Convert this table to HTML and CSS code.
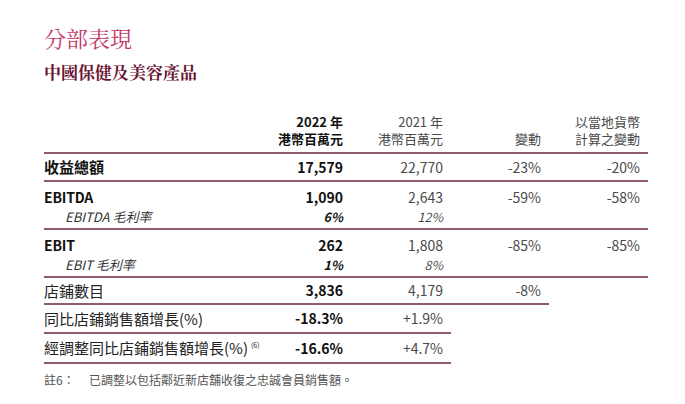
FILE: index.html
```html
<!DOCTYPE html>
<html lang="zh-Hant">
<head>
<meta charset="utf-8">
<title>分部表現</title>
<link rel="stylesheet" href="styles.css">
</head>
<body>
<main class="page">
  <h1 class="title">分部表現</h1>
  <h2 class="subtitle">中國保健及美容產品</h2>

  <section class="table">
    <div class="row head">
      <div class="c"></div>
      <div class="c num strong"><div>2022 年</div><div>港幣百萬元</div></div>
      <div class="c num"><div>2021 年</div><div>港幣百萬元</div></div>
      <div class="c num"><div>變動</div></div>
      <div class="c num"><div>以當地貨幣</div><div>計算之變動</div></div>
    </div>

    <div class="row r1">
      <div class="c label strong">收益總額</div>
      <div class="c num strong">17,579</div>
      <div class="c num">22,770</div>
      <div class="c num">-23%</div>
      <div class="c num">-20%</div>
    </div>

    <div class="row r2">
      <div class="c label"><div class="latin strong">EBITDA</div><div class="sub">EBITDA 毛利率</div></div>
      <div class="c num"><div class="strong">1,090</div><div class="sub strong">6%</div></div>
      <div class="c num"><div>2,643</div><div class="sub">12%</div></div>
      <div class="c num"><div>-59%</div></div>
      <div class="c num"><div>-58%</div></div>
    </div>

    <div class="row r2">
      <div class="c label"><div class="latin strong">EBIT</div><div class="sub">EBIT 毛利率</div></div>
      <div class="c num"><div class="strong">262</div><div class="sub strong">1%</div></div>
      <div class="c num"><div>1,808</div><div class="sub">8%</div></div>
      <div class="c num"><div>-85%</div></div>
      <div class="c num"><div>-85%</div></div>
    </div>

    <div class="row r4">
      <div class="c label">店鋪數目</div>
      <div class="c num strong">3,836</div>
      <div class="c num">4,179</div>
      <div class="c num">-8%</div>
      <div class="blank"></div>
    </div>

    <div class="row r5">
      <div class="c label">同比店鋪銷售額增長(%)</div>
      <div class="c num strong">-18.3%</div>
      <div class="c num">+1.9%</div>
      <div class="blank"></div>
      <div class="blank"></div>
    </div>

    <div class="row r6">
      <div class="c label">經調整同比店鋪銷售額增長(%)<sup class="note-ref">(6)</sup></div>
      <div class="c num strong">-16.6%</div>
      <div class="c num">+4.7%</div>
      <div class="blank"></div>
      <div class="blank"></div>
    </div>
  </section>

  <p class="footnote"><span class="fn-key">註6：</span><span>已調整以包括鄰近新店舖收復之忠誠會員銷售額。</span></p>
</main>
</body>
</html>
```

FILE: styles.css
```css
:root {
  --line: #8f5b6f;
  --text: #1f1f1f;
  --soft: #4a4a4a;
}

* { box-sizing: content-box; }

body {
  margin: 0;
  background: #ffffff;
  color: var(--text);
  font-family: "Noto Sans CJK TC", "Noto Sans", sans-serif;
}

.page {
  padding: 23px 0 0 44px;
}

.title {
  margin: 0;
  font-family: "Noto Serif CJK TC", "Noto Serif CJK SC", "Liberation Serif", serif;
  font-weight: 400;
  font-size: 22px;
  line-height: 30px;
  color: #c23869;
}

.subtitle {
  margin: 7px 0 0;
  font-family: "Noto Serif CJK TC", "Noto Serif CJK SC", "Liberation Serif", serif;
  font-weight: 700;
  font-size: 17px;
  line-height: 24px;
  color: #6b1434;
}

.table {
  margin-top: 29px;
  width: 604px;
}

.row {
  display: grid;
  grid-template-columns: 227px 80px 100px 98px 99px;
}

.c {
  border-bottom: 2px solid var(--line);
}

.num {
  text-align: right;
  padding-right: 8px;
  font-size: 14px;
  color: var(--soft);
}

.num.strong, .num .strong { color: #111; }

.strong { font-weight: 700; }

.label {
  font-size: 15px;
  color: #222;
}

.label.strong { color: #111; }

.latin {
  font-size: 14px;
  letter-spacing: -0.2px;
  color: #111;
}

.head .c {
  display: flex;
  flex-direction: column;
  justify-content: flex-end;
  height: 34px;
  padding-bottom: 5px;
  font-size: 13px;
  line-height: 17px;
}

.head .num { align-items: flex-end; }

.r1 .c { height: 26px; line-height: 26px; }

.r2 .c {
  padding-top: 6px;
  height: 40px;
  line-height: 19px;
}

.sub {
  font-style: italic;
  font-size: 12.5px;
}

.label .sub {
  padding-left: 21px;
  font-size: 13px;
  color: #333;
}

.r4 .c { height: 25px; line-height: 25px; }
.r5 .c { height: 27px; line-height: 27px; }
.r6 .c { height: 28px; line-height: 28px; }

.note-ref {
  font-size: 7px;
  vertical-align: 6px;
  margin-left: 3px;
  line-height: 0;
}

.footnote {
  margin: 8px 0 0;
  font-size: 12px;
  line-height: 16px;
  color: #555;
  display: flex;
}

.fn-key {
  width: 45px;
}
```
